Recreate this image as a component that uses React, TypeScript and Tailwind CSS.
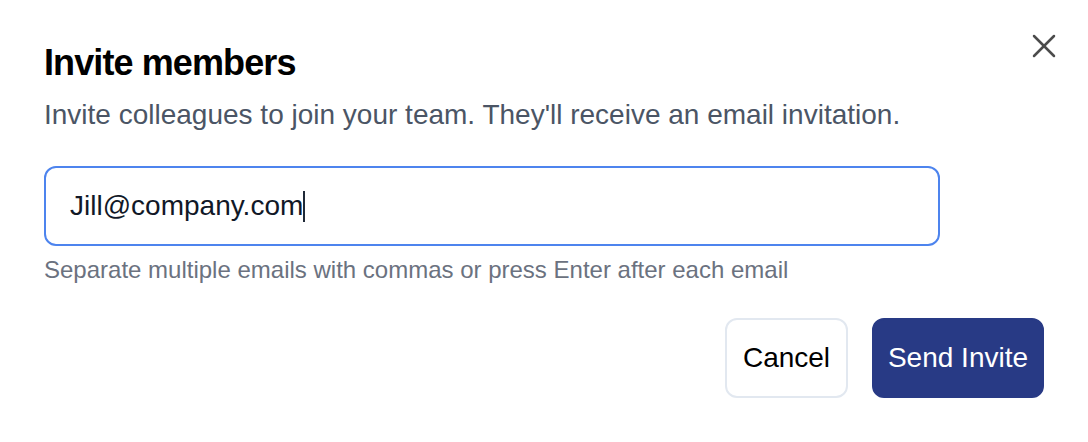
import React from 'react'
import { X } from 'lucide-react'

function InviteDialog() {
    return (
        <div className="relative w-[1088px] h-[442px] bg-white px-[44px] pt-[43px] font-['Liberation_Sans',Arial,sans-serif]">
            <button className="absolute right-[24px] top-[26px] w-[40px] h-[40px] flex items-center justify-center text-[#4b4b4b]">
                <X size={40} strokeWidth={1.5} />
            </button>

            <h2 className="text-[36px] leading-[40px] font-bold tracking-tight text-black">Invite members</h2>
            <p className="mt-[12px] text-[28px] leading-[40px] text-[#4b5565]">
                Invite colleagues to join your team. They'll receive an email invitation.
            </p>

            <div className="mt-[31px] w-[896px] h-[80px] flex items-center px-[24px] border-2 border-[#4d84ee] rounded-[12px]">
                <span className="text-[28px] leading-[40px] text-[#111827]">Jill@company.com</span>
                <span className="w-[2px] h-[31px] bg-[#1f2937]" />
            </div>
            <p className="mt-[8px] text-[24px] leading-[32px] text-[#6b7280]">
                Separate multiple emails with commas or press Enter after each email
            </p>

            <div className="mt-[32px] flex justify-end gap-[24px]">
                <button className="h-[80px] w-[123px] border-2 border-[#e2e8f0] rounded-[12px] bg-white text-[28px] text-black">
                    Cancel
                </button>
                <button className="h-[80px] w-[172px] border-2 border-[#283a85] rounded-[12px] bg-[#283a85] text-[28px] text-white">
                    Send Invite
                </button>
            </div>
        </div>
    )
}

export default function App() {
    return <InviteDialog />
}
